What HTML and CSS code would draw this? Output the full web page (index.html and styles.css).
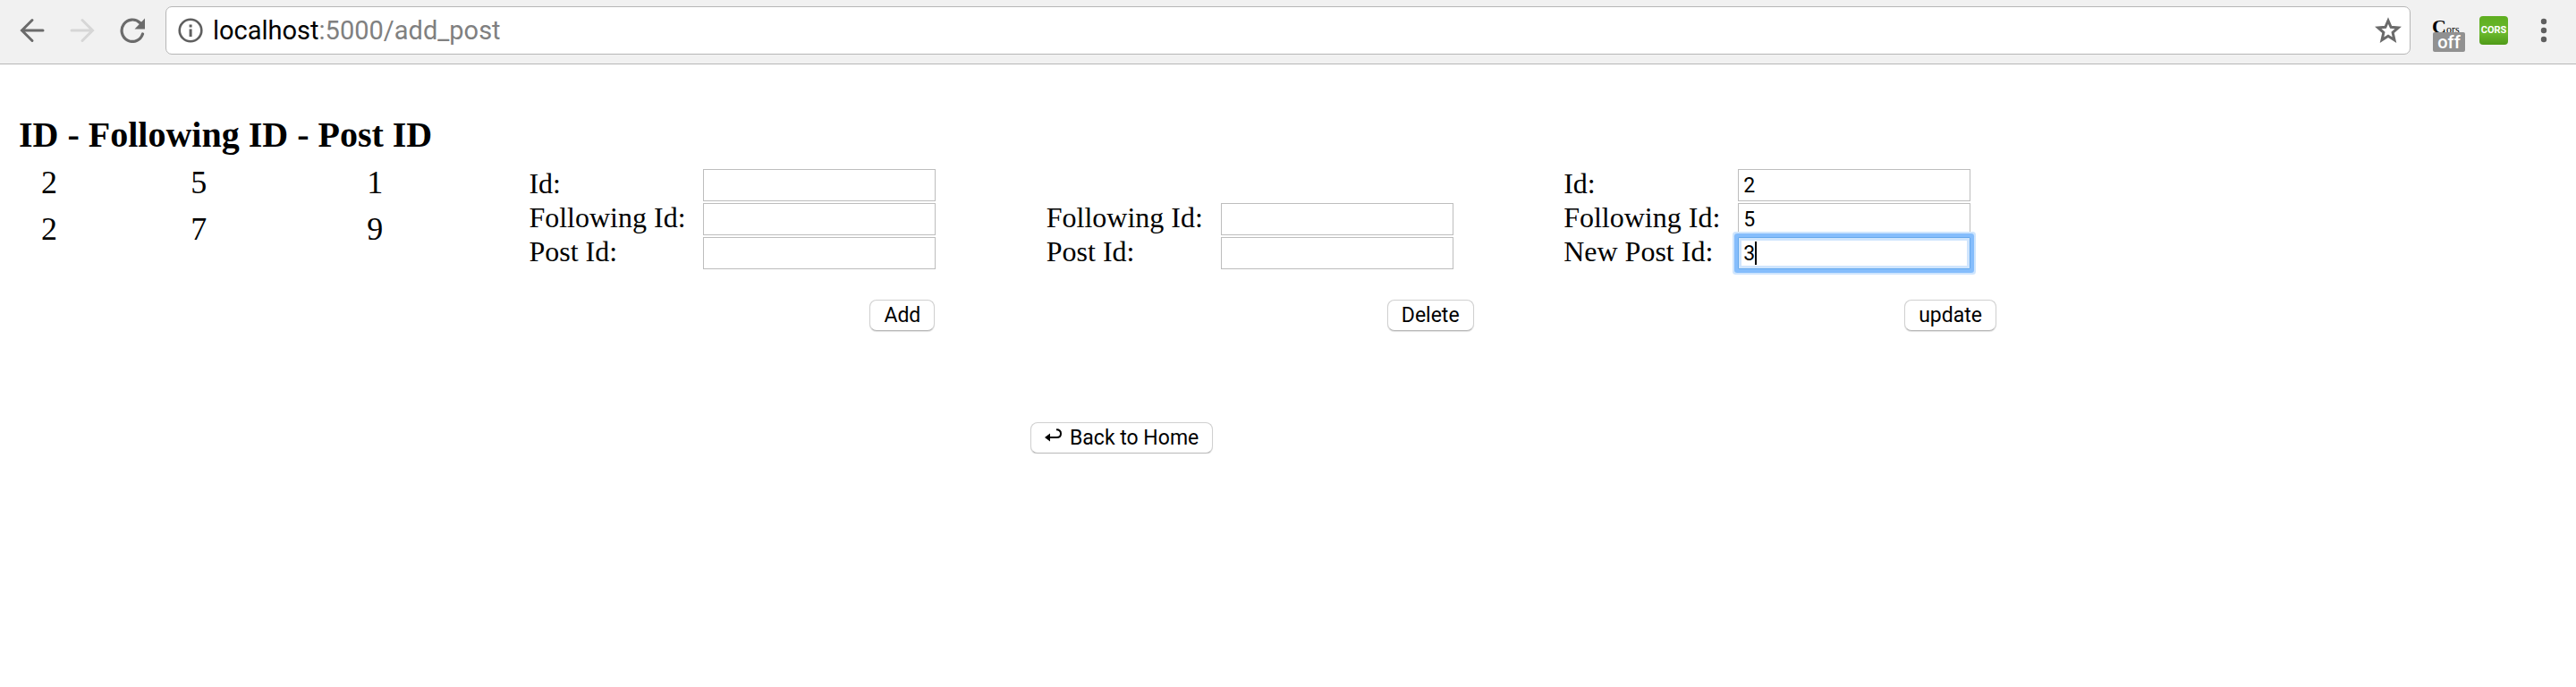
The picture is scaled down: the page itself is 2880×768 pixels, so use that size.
FILE: index.html
```html
<!DOCTYPE html>
<html lang="en">
<head>
<meta charset="utf-8">
<title>add_post</title>
<link rel="stylesheet" href="styles.css">
</head>
<body>
<header class="toolbar">
  <nav class="nav">
    <button class="icon" type="button" aria-label="Back"><svg width="28" height="28" viewBox="0 0 28 28"><path d="M26 14H3M14 2.500L2.500 14L14 25.500" fill="none" stroke="#6b6b6b" stroke-width="3" stroke-linecap="round"/></svg></button>
    <button class="icon" type="button" aria-label="Forward" disabled><svg width="28" height="28" viewBox="0 0 28 28"><path d="M2 14H25M14 2.500L25.500 14L14 25.500" fill="none" stroke="#d6d6d6" stroke-width="3" stroke-linecap="round"/></svg></button>
    <button class="icon" type="button" aria-label="Reload"><svg width="28" height="28" viewBox="0 0 28 28"><path d="M22.500 5.500A12 12.200 0 1 0 25.500 18" fill="none" stroke="#6b6b6b" stroke-width="3.200" stroke-linecap="round"/><path d="M28 0.500V12.500H16.500Z" fill="#6b6b6b"/></svg></button>
  </nav>
  <div class="omnibox">
    <svg width="28" height="28" viewBox="0 0 28 28" aria-hidden="true"><circle cx="14" cy="14" r="12.300" fill="none" stroke="#5f5f5f" stroke-width="2.600"/><path d="M12.600 7.500h3v3h-3zM12.600 12.500h3v8.500h-3z" fill="#5f5f5f"/></svg>
    <div class="url"><span class="host">localhost</span>:5000/add_post</div>
    <button class="icon" type="button" aria-label="Bookmark"><svg width="30" height="30" viewBox="0 0 30 30"><path d="M15 4L18.100 11.300L26.300 12L20.100 17.400L22 25.800L15 21.300L8 25.800L9.900 17.400L3.700 12L11.900 11.300Z" fill="none" stroke="#6b6b6b" stroke-width="3"/></svg></button>
  </div>
  <div class="tools">
    <button class="icon ext" type="button" aria-label="Cors off"><span class="ext-name"><b>C</b>ors</span><span class="badge">off</span></button>
    <button class="icon cors" type="button">CORS</button>
    <button class="icon" type="button" aria-label="Menu"><svg width="8" height="28" viewBox="0 0 8 28"><g fill="#5f5f5f"><circle cx="4" cy="4" r="3.200"/><circle cx="4" cy="14" r="3.200"/><circle cx="4" cy="24" r="3.200"/></g></svg></button>
  </div>
</header>
<main class="page">
  <div class="columns">
    <table class="posts">
      <thead><tr><th>ID -</th><th>Following ID -</th><th>Post ID</th></tr></thead>
      <tbody>
        <tr><td>2</td><td>5</td><td>1</td></tr>
        <tr><td>2</td><td>7</td><td>9</td></tr>
      </tbody>
    </table>
    <form class="form">
      <div class="row"><label for="a1">Id:</label><input id="a1" type="text"></div>
      <div class="row"><label for="a2">Following Id:</label><input id="a2" type="text"></div>
      <div class="row"><label for="a3">Post Id:</label><input id="a3" type="text"></div>
      <button class="btn submit" type="button">Add</button>
    </form>
    <form class="form">
      <div class="row"><label for="d1">Following Id:</label><input id="d1" type="text"></div>
      <div class="row"><label for="d2">Post Id:</label><input id="d2" type="text"></div>
      <button class="btn submit" type="button">Delete</button>
    </form>
    <form class="form">
      <div class="row"><label for="u1">Id:</label><input id="u1" type="text" value="2"></div>
      <div class="row"><label for="u2">Following Id:</label><input id="u2" type="text" value="5"></div>
      <div class="row"><label for="u3">New Post Id:</label><span class="field"><input id="u3" class="active" type="text" value="3"><span class="caret"></span></span></div>
      <button class="btn submit" type="button">update</button>
    </form>
  </div>
  <button class="btn home" type="button"><svg width="20" height="22" viewBox="0 0 20 22" aria-hidden="true"><path d="M4 10H13.500Q18 10 18 5.700Q18 1.200 13 1.200" fill="none" stroke="#000" stroke-width="2"/><path d="M0 10L6 5.500V14.500Z"/></svg>Back to Home</button>
</main>
</body>
</html>
```
FILE: styles.css
```css
* { box-sizing: border-box; }
body {
  margin: 0;
  background: #fff;
  color: #000;
  font-family: "Liberation Serif", serif;
}
button, input { margin: 0; font-family: Roboto, sans-serif; color: #000; }

.toolbar {
  display: flex;
  align-items: center;
  height: 72px;
  padding: 0 32px 4px 22px;
  background: #f1f1f1;
  border-bottom: 1px solid #b6b6b6;
}
.nav { display: flex; gap: 28px; }
.icon { display: flex; padding: 0; border: 0; background: none; }
.omnibox {
  display: flex;
  flex: 1;
  align-items: center;
  height: 54px;
  margin-left: 23px;
  padding: 0 9px 0 13px;
  border: 1px solid #b6b6b6;
  border-radius: 7px;
  background: #fff;
}
.url {
  flex: 1;
  margin-left: 11px;
  color: #808080;
  font: 29px/36px Roboto, sans-serif;
}
.host { color: #000; }
.tools { display: flex; align-items: center; gap: 16px; margin-left: 24px; }
.tools .icon:last-child { margin-left: 20px; }
.ext {
  flex-direction: column;
  width: 37px;
  padding-top: 12px;
}
.ext-name {
  align-self: flex-start;
  height: 14px;
  overflow: hidden;
  font: 12px/16px "Liberation Serif", serif;
}
.ext-name b { font-size: 22px; line-height: 16px; }
.badge {
  align-self: flex-end;
  width: 36px;
  height: 22px;
  border-radius: 2px;
  background: #919191;
  color: #fff;
  font: 500 20px/22px Roboto, sans-serif;
}
.cors {
  justify-content: center;
  width: 32px;
  height: 32px;
  border-radius: 4px;
  background: linear-gradient(#5fae20, #6ab82c 60%, #4f9a18);
  color: #fff;
  font: bold 11px/32px Roboto, sans-serif;
}

.page { padding-top: 52px; }
.columns {
  display: grid;
  grid-template-columns: repeat(4, 20%);
  column-gap: 5px;
  padding-left: 13px;
}
.posts {
  justify-self: start;
  align-self: start;
  margin-left: 3px;
  border-collapse: collapse;
  text-align: center;
}
.posts th, .posts td { padding: 0 5px; }
.posts th { font-size: 40px; line-height: 54px; white-space: nowrap; }
.posts td { font-size: 36px; line-height: 52px; }
.form {
  display: flex;
  flex-direction: column;
  justify-content: flex-end;
  gap: 2px;
  height: 246px;
}
.row { display: flex; align-items: center; height: 36px; font-size: 32px; }
.row label { width: 195px; line-height: 32px; padding-bottom: 4px; }
.row input {
  display: block;
  width: 260px;
  height: 36px;
  padding: 2px 5px;
  border: 1px solid #bdbdbd;
  background: #fff;
  font-size: 23px;
  outline: 0;
}
.field { position: relative; }
.row .active {
  border-color: #66a9ec;
  border-radius: 1px;
  box-shadow: inset 0 0 0 3px #cfe5fd, 0 0 0 4px #85bdfc, 0 0 0 6px #cfe5fd;
}
.caret {
  position: absolute;
  left: 19px;
  top: 5px;
  width: 2px;
  height: 26px;
  background: #000;
}
.btn {
  height: 35px;
  padding: 0 15px;
  border: 1px solid #d0d0d0;
  border-bottom-color: #b8b8b8;
  border-radius: 8px;
  background: #fff;
  box-shadow: 0 1px 1px #dedede;
  font-size: 23px;
  line-height: 30px;
}
.submit { align-self: flex-start; margin: 32px 0 0 381px; }
.home { display: flex; align-items: center; gap: 8px; margin: 102px 0 0 40%; }
```
